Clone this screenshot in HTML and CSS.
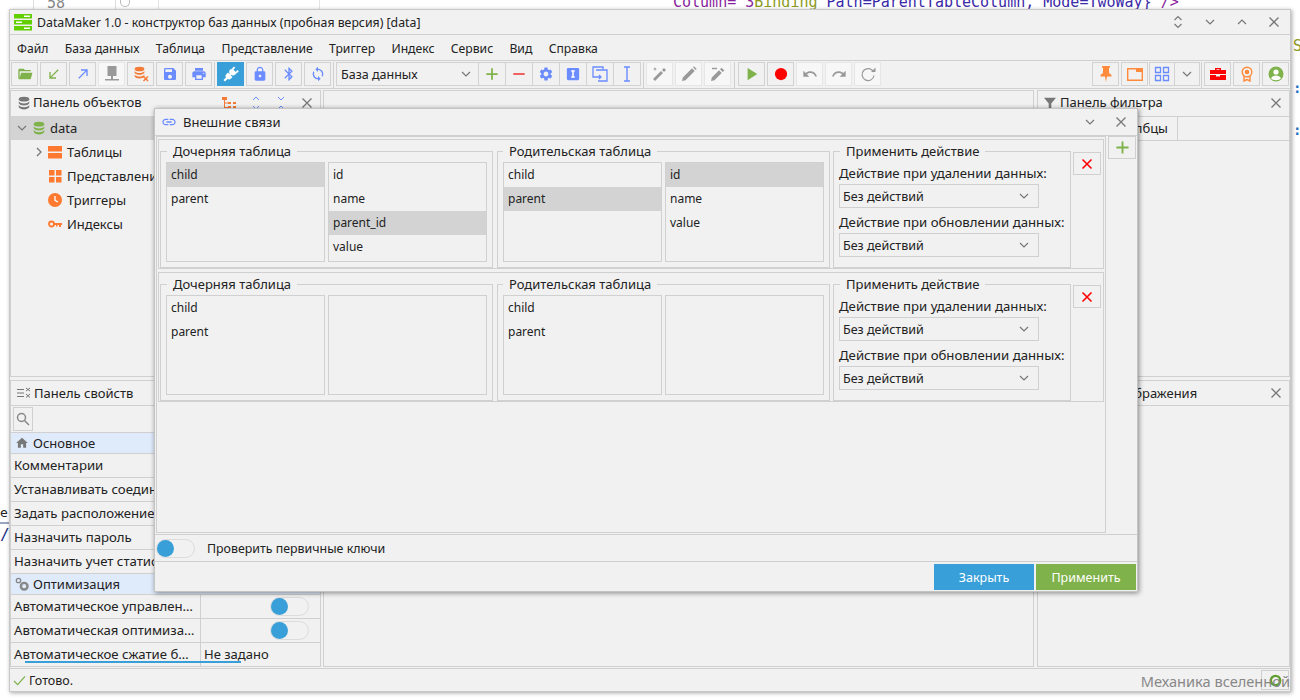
FILE: index.html
```html
<!DOCTYPE html>
<html lang="ru">
<head>
    <meta charset="UTF-8">
    <title>DataMaker 1.0</title>
    <link rel="stylesheet" href="styles.css">
</head>
<body>

    <!-- Icons used more than once -->
    <svg class="sprite" xmlns="http://www.w3.org/2000/svg">
        <symbol id="i-close" viewBox="0 0 12 12"><path d="M1.5 1.5l9 9M10.5 1.5l-9 9" fill="none" stroke="#777" stroke-width="1.3"/></symbol>
        <symbol id="i-down" viewBox="0 0 12 12"><path d="M2 4l4 4 4-4" fill="none" stroke="#777" stroke-width="1.2"/></symbol>
        <symbol id="i-up" viewBox="0 0 12 12"><path d="M2 8l4-4 4 4" fill="none" stroke="#777" stroke-width="1.2"/></symbol>
        <symbol id="i-plus" viewBox="0 0 16 16"><path d="M8 1.5v13M1.5 8h13" fill="none" stroke="#7fb24a" stroke-width="2"/></symbol>
        <symbol id="i-cross" viewBox="0 0 12 12"><path d="M1.5 1.5l9 9M10.5 1.5l-9 9" fill="none" stroke="#f00" stroke-width="1.6"/></symbol>
        <symbol id="i-db" viewBox="0 0 16 16"><ellipse cx="8" cy="3.6" rx="6" ry="2.8"/><path d="M2 6c1 1.700 3.400 2.500 6 2.500S13 7.700 14 6v2.300c-1 1.700-3.400 2.500-6 2.500S3 10 2 8.300z"/><path d="M2 10.400c1 1.700 3.400 2.500 6 2.500s5-.8 6-2.500v2.200c-.6 1.700-3.400 2.800-6 2.800s-5.400-1.100-6-2.800z"/></symbol>
        <symbol id="i-wand" viewBox="0 0 16 16"><path d="M3 15l-2-2 8-8 2 2z M10 4l2-2 2 2-2 2z"/><path d="M3 1l.6 1.400L5 3l-1.400.6L3 5l-.6-1.400L1 3l1.400-.6z"/></symbol>
    </svg>

    <!-- Things behind the application window -->
    <div class="backdrop">
        <div class="bg-grid"></div>
        <div class="bg-line-no">58</div>
        <div class="bg-fold"></div>
        <div class="bg-code"><span class="c-purple">Column="3</span><span class="c-olive">Binding</span> <span class="c-blue">Path=ParentTableColumn, Mode=TwoWay}</span><span class="c-purple">"/&gt;</span></div>
        <div class="bg-side-o">So</div>
        <div class="bg-dots bg-dots-a">:</div>
        <div class="bg-dots bg-dots-b">:</div>
        <div class="bg-left-e">e</div>
        <div class="bg-left-rule"></div>
        <div class="bg-left-slash">/</div>
    </div>

    <div class="app-window">

        <div class="title-bar">
            <svg class="app-logo" viewBox="0 0 18 17" width="18" height="17"><path fill="#62d000" d="M0 0h18v4.500H0zM0 6h18v4.500H0zM0 12h18v4.500H0z"/><path fill="#fff" d="M10 1.400h6v1.700h-6zM2 7.400h6v1.700H2zM10 13.400h6v1.700h-6z"/></svg>
            <span class="title-text">DataMaker 1.0 - конструктор баз данных (пробная версия) [data]</span>
            <div class="win-controls">
                <span class="win-btn"><svg width="10" height="14" viewBox="0 0 10 14" fill="none" stroke="#777" stroke-width="1.100"><path d="M1.500 5l3.500-3.500L8.500 5M1.500 9L5 12.500 8.500 9"/></svg></span>
                <span class="win-btn"><svg width="12" height="12"><use href="#i-down"/></svg></span>
                <span class="win-btn"><svg width="12" height="12"><use href="#i-up"/></svg></span>
                <span class="win-btn"><svg width="12" height="12"><use href="#i-close"/></svg></span>
            </div>
        </div>

        <div class="menu-bar">
            <span>Файл</span>
            <span>База данных</span>
            <span>Таблица</span>
            <span>Представление</span>
            <span>Триггер</span>
            <span>Индекс</span>
            <span>Сервис</span>
            <span>Вид</span>
            <span>Справка</span>
        </div>

        <div class="tool-bar">
            <div class="tb-group">
                <span class="tb"><svg viewBox="0 0 24 24"><path fill="#7fb24a" d="M19 20H4c-1.110 0-2-.9-2-2V6c0-1.110.89-2 2-2h6l2 2h7a2 2 0 0 1 2 2H4v10l2.140-8h17.070l-2.280 8.500c-.23.87-1.010 1.500-1.930 1.500z"/></svg></span>
                <span class="tb"><svg viewBox="0 0 24 24"><path fill="#7fb24a" d="M19 6.410L17.590 5 7 15.590V9H5v10h10v-2H8.410z"/></svg></span>
                <span class="tb"><svg viewBox="0 0 24 24"><path fill="#6a8cff" d="M5 17.590L6.410 19 17 8.410V15h2V5H9v2h6.590z"/></svg></span>
                <span class="tb tb-off"><svg viewBox="0 0 16 16"><path fill="#999" d="M3.500 0h9v10h-9zM7 10h2v3H7zM1 13h14v1.500H1z"/></svg></span>
                <span class="tb"><svg viewBox="0 0 16 16" fill="#f47a35"><use href="#i-db" width="13" height="13"/><path d="M10.500 10.500l4.500 4.500M15 10.500L10.500 15" stroke="#f47a35" stroke-width="1.500"/></svg></span>
                <span class="tb"><svg viewBox="0 0 24 24"><path fill="#6a8cff" d="M17 3H5c-1.110 0-2 .9-2 2v14c0 1.100.89 2 2 2h14c1.100 0 2-.9 2-2V7l-4-4zm-5 16c-1.660 0-3-1.340-3-3s1.340-3 3-3 3 1.340 3 3-1.340 3-3 3zm3-10H5V5h10v4z"/></svg></span>
                <span class="tb"><svg viewBox="0 0 24 24"><path fill="#6a8cff" d="M19 8H5c-1.660 0-3 1.340-3 3v6h4v4h12v-4h4v-6c0-1.660-1.340-3-3-3zm-3 11H8v-5h8v5zm3-7c-.55 0-1-.45-1-1s.45-1 1-1 1 .45 1 1-.45 1-1 1zm-1-9H6v4h12V3z"/></svg></span>
            </div>
            <div class="tb-sep"></div>
            <div class="tb-group">
                <span class="tb tb-on"><svg viewBox="0 0 16 16" fill="#fff"><path d="M9.500 2.200l4.300 4.300-1.500 1.500c-1.200 1.200-3 1.300-4.300.2L6.600 9.600 5.300 8.300l1.400-1.400c-.8-1.200-.7-2.900.4-4z" transform="translate(0 .5)"/><path d="M11 .5l1.300 1.300-2 2L9 2.500zM14.500 4l1.300 1.300-2 2L12.500 6z"/><path d="M5 6.500L9.500 11l-1.700 1.700c-1 1-2.300 1-3.200.3L2 15.500 .5 14l2.500-2.600c-.7-1-.7-2.200.3-3.200z"/></svg></span>
                <span class="tb"><svg viewBox="0 0 24 24"><path fill="#6a8cff" d="M18 8h-1V6c0-2.760-2.240-5-5-5S7 3.240 7 6v2H6c-1.100 0-2 .9-2 2v10c0 1.100.9 2 2 2h12c1.100 0 2-.9 2-2V10c0-1.100-.9-2-2-2zm-6 9c-1.100 0-2-.9-2-2s.9-2 2-2 2 .9 2 2-.9 2-2 2zm3.100-9H8.900V6c0-1.710 1.390-3.100 3.100-3.100 1.710 0 3.100 1.390 3.100 3.100v2z"/></svg></span>
                <span class="tb"><svg viewBox="0 0 24 24"><path fill="#6a8cff" d="M17.710 7.710L12 2h-1v7.590L6.410 5 5 6.410 10.590 12 5 17.590 6.410 19 11 14.410V22h1l5.710-5.710-4.300-4.290 4.300-4.290zM13 5.830l1.880 1.880L13 9.590V5.830zm1.880 10.460L13 18.170v-3.760l1.880 1.880z"/></svg></span>
                <span class="tb"><svg viewBox="0 0 24 24"><path fill="#6a8cff" d="M12 4V1L8 5l4 4V6c3.310 0 6 2.690 6 6 0 1.010-.25 1.970-.7 2.800l1.460 1.460C19.540 15.030 20 13.570 20 12c0-4.420-3.580-8-8-8zm0 14c-3.310 0-6-2.690-6-6 0-1.010.25-1.970.7-2.800L5.240 7.740C4.460 8.970 4 10.430 4 12c0 4.420 3.580 8 8 8v3l4-4-4-4v3z"/></svg></span>
            </div>
            <div class="tb-sep"></div>
            <div class="tb-joined">
                <div class="tb-combo"><span>База данных</span><svg width="12" height="12"><use href="#i-down"/></svg></div>
                <span class="tb"><svg class="tb-mini" viewBox="0 0 16 16"><use href="#i-plus"/></svg></span>
                <span class="tb"><svg class="tb-mini" viewBox="0 0 16 16"><path d="M1.500 8h13" stroke="#f05a5a" stroke-width="2.200"/></svg></span>
                <span class="tb"><svg viewBox="0 0 24 24"><path fill="#6a8cff" d="M19.140 12.940c.04-.3.06-.61.06-.94 0-.32-.02-.64-.07-.94l2.030-1.580a.49.49 0 0 0 .12-.61l-1.920-3.320a.488.488 0 0 0-.59-.22l-2.390.96c-.5-.38-1.030-.7-1.620-.94l-.36-2.540a.484.484 0 0 0-.48-.41h-3.840c-.24 0-.43.17-.47.41l-.36 2.540c-.59.24-1.130.57-1.620.94l-2.390-.96c-.22-.08-.47 0-.59.22L2.740 8.870c-.12.21-.08.47.12.61l2.030 1.580c-.05.3-.09.63-.09.94s.02.64.07.94l-2.030 1.580a.49.49 0 0 0-.12.61l1.920 3.320c.12.22.37.29.59.22l2.390-.96c.5.38 1.030.7 1.620.94l.36 2.540c.05.24.24.41.48.41h3.840c.24 0 .44-.17.47-.41l.36-2.540c.59-.24 1.130-.56 1.620-.94l2.390.96c.22.08.47 0 .59-.22l1.920-3.320c.12-.22.07-.47-.12-.61l-2.010-1.580zM12 15.600c-1.980 0-3.600-1.620-3.600-3.600s1.620-3.600 3.600-3.600 3.600 1.620 3.600 3.600-1.620 3.600-3.600 3.600z"/></svg></span>
                <span class="tb"><svg class="tb-mini" viewBox="0 0 16 16"><rect x="1" y="1" width="14" height="14" rx="1.500" fill="#6a8cff"/><path d="M6 4.500h4M6 11.500h4M8 4.500v7" stroke="#fff" stroke-width="1.800" fill="none"/></svg></span>
                <span class="tb"><svg viewBox="0 0 16 16" fill="none" stroke="#6a8cff" stroke-width="1.300"><path d="M11 3.500V1H1v10h3"/><path d="M4 4h11v11H6"/><path d="M4 11h5M7 9l2 2-2 2"/></svg></span>
                <span class="tb"><svg viewBox="0 0 16 16" fill="none" stroke="#6a8cff" stroke-width="1.400"><path d="M5 1h6M5 15h6M8 1v14"/></svg></span>
            </div>
            <div class="tb-sep"></div>
            <div class="tb-group">
                <span class="tb tb-off"><svg viewBox="0 0 16 16" fill="#999"><use href="#i-wand"/></svg></span>
                <span class="tb tb-off"><svg viewBox="0 0 16 16"><path fill="#999" d="M1 15l.8-3.500L11 2.300 13.700 5 4.500 14.200zM12 1.300l1-1L15.700 3l-1 1z"/></svg></span>
                <span class="tb tb-off"><svg viewBox="0 0 16 16"><path fill="#999" d="M1 15l.8-3.500L9 4.300 11.700 7 4.500 14.200zM10 3.300l1.600-1.600L14.300 4.400 12.700 6z"/><path d="M2 2.500h5" stroke="#999" stroke-width="1.400"/></svg></span>
            </div>
            <div class="tb-sep tb-sep-wide"></div>
            <div class="tb-group">
                <span class="tb"><svg class="tb-mini" viewBox="0 0 16 16"><path fill="#7fb24a" d="M3 1l11 7-11 7z"/></svg></span>
                <span class="tb"><svg class="tb-mini" viewBox="0 0 16 16"><circle cx="8" cy="8" r="7" fill="#f00"/></svg></span>
                <span class="tb tb-off"><svg viewBox="0 0 24 24"><path fill="#999" d="M12.500 8c-2.650 0-5.050.99-6.900 2.600L2 7v9h9l-3.620-3.620c1.390-1.160 3.160-1.880 5.120-1.880 3.540 0 6.550 2.310 7.600 5.500l2.370-.78C21.080 11.030 17.150 8 12.500 8z"/></svg></span>
                <span class="tb tb-off"><svg viewBox="0 0 24 24"><path fill="#999" d="M18.400 10.600C16.550 8.990 14.150 8 11.500 8c-4.650 0-8.580 3.030-9.960 7.220L3.900 16c1.050-3.190 4.050-5.500 7.600-5.500 1.950 0 3.730.72 5.120 1.880L13 16h9V7l-3.600 3.600z"/></svg></span>
                <span class="tb tb-off"><svg viewBox="0 0 16 16" fill="none" stroke="#999" stroke-width="1.200"><path d="M13.500 6A6 6 0 1 0 14 9.500"/><path fill="#999" stroke="none" d="M11 6h4.500V1.500z"/></svg></span>
            </div>
            <div class="tb-spacer"></div>
            <div class="tb-group">
                <span class="tb"><svg viewBox="0 0 16 16"><path fill="#ff8a3c" d="M4 0h8v1.500l-1 .5v5l2.500 2v1.500H9L8 16l-1-5.500H2.500V9L5 7V2l-1-.5z"/></svg></span>
                <span class="tb"><svg viewBox="0 0 16 16"><path fill="none" stroke="#ff8a3c" stroke-width="1.400" d="M.7 2.700h14.600v11.600H.7z"/><path fill="#ff8a3c" d="M9 2h7v4H9z"/></svg></span>
                <div class="tb-joined">
                    <span class="tb tb-wide"><svg viewBox="0 0 16 16" fill="none" stroke="#6a8cff" stroke-width="1.300"><path d="M1.500 1.500h5v5h-5zM9.500 1.500h5v5h-5zM1.500 9.500h5v5h-5zM9.500 9.500h5v5h-5z"/></svg></span>
                    <span class="tb tb-wide"><svg class="tb-chev" viewBox="0 0 12 12"><use href="#i-down"/></svg></span>
                </div>
            </div>
            <div class="tb-sep tb-sep-narrow"></div>
            <div class="tb-group">
                <span class="tb"><svg viewBox="0 0 16 16"><path fill="#f00" d="M5 2h6v2h5v4H0V4h5zM6.500 3.300v.7h3v-.7zM0 9h6v1.500h4V9h6v5H0z"/></svg></span>
                <span class="tb"><svg viewBox="0 0 16 16" fill="none" stroke="#ff8a3c" stroke-width="1.400"><circle cx="8" cy="6" r="4.800"/><circle cx="8" cy="6" r="1.600" fill="#ff8a3c"/><path d="M5 10v5l3-1.500 3 1.500v-5"/></svg></span>
                <span class="tb"><svg viewBox="0 0 16 16"><circle cx="8" cy="8" r="7.500" fill="#7fb24a"/><circle cx="8" cy="6" r="2.600" fill="#fff"/><path fill="#fff" d="M3 12.500c.8-2 2.800-3 5-3s4.200 1 5 3c-1.200 1-3 1.700-5 1.700s-3.800-.7-5-1.700z"/></svg></span>
            </div>
        </div>

        <div class="workspace">
            <div class="side-col side-left">
                <div class="panel">
                    <div class="panel-head">
                        <svg class="ph-icon" viewBox="0 0 16 16" fill="#777" width="14" height="14"><use href="#i-db"/></svg>
                        <span class="ph-title">Панель объектов</span>
                        <div class="ph-tools">
                            <svg width="14" height="12" viewBox="0 0 14 12" fill="#f47a35"><path d="M0 0h5v3H0zM6 5h3v2H6zM11 5h3v2h-3zM6 9h3v2H6zM11 9h3v2h-3zM2 3h1v7h3v1H2zM3 5.500h3v1H3z"/></svg>
                            <svg width="10" height="14" viewBox="0 0 10 14" fill="none" stroke="#6a8cff"><path d="M2 4l3-3 3 3M2 10l3 3 3-3"/></svg>
                            <svg width="10" height="14" viewBox="0 0 10 14" fill="none" stroke="#6a8cff"><path d="M2 1l3 3 3-3M2 13l3-3 3 3"/></svg>
                            <svg width="12" height="12"><use href="#i-close"/></svg>
                        </div>
                    </div>
                    <div class="tree-row tree-selected">
                        <svg class="tree-arrow" width="12" height="12"><use href="#i-down"/></svg>
                        <svg class="tree-db" viewBox="0 0 16 16" width="14" height="14" fill="#7fb24a"><use href="#i-db"/></svg>
                        <span>data</span>
                    </div>
                    <div class="tree-row tree-child">
                        <svg class="tree-arrow" viewBox="0 0 12 12" width="12" height="12"><path d="M6 2l4 4-4 4" fill="none" stroke="#777" stroke-width="1.300"/></svg>
                        <svg viewBox="0 0 14 14" width="14" height="14" fill="#ff7a30"><path d="M0 1h14v5.500H0zM0 8h14v5.500H0z"/></svg>
                        <span>Таблицы</span>
                    </div>
                    <div class="tree-row tree-child">
                        <i class="tree-arrow"></i>
                        <svg viewBox="0 0 14 14" width="14" height="14" fill="#ff7a30"><path d="M1 1h5.500v5.500H1zM8 1h5.500v5.500H8zM1 8h5.500v5.500H1zM8 8h5.500v5.500H8z"/></svg>
                        <span>Представления</span>
                    </div>
                    <div class="tree-row tree-child">
                        <i class="tree-arrow"></i>
                        <svg viewBox="0 0 14 14" width="14" height="14"><circle cx="7" cy="7" r="7" fill="#ff7a30"/><path d="M7 3v4.300l3 1.700" stroke="#fff" stroke-width="1.300" fill="none"/></svg>
                        <span>Триггеры</span>
                    </div>
                    <div class="tree-row tree-child">
                        <i class="tree-arrow"></i>
                        <svg viewBox="0 0 14 14" width="14" height="14"><circle cx="3.500" cy="7" r="2.500" fill="none" stroke="#ff7a30" stroke-width="1.800"/><path fill="#ff7a30" d="M6 6h8v2h-1v2h-2V8H9.500v1.500h-1.500V8H6z"/></svg>
                        <span>Индексы</span>
                    </div>
                </div>

                <div class="panel">
                    <div class="panel-head panel-head-short">
                        <svg class="ph-icon" width="14" height="12" viewBox="0 0 14 12" fill="none" stroke="#777"><path d="M0 2.500h7M0 6h7M0 9.500h7M9 1l4 3M13 1L9 4M9 7l4 3.500M13 7l-4 3.500"/></svg>
                        <span class="ph-title ph-title-near">Панель свойств</span>
                    </div>
                    <div class="prop-search">
                        <span class="prop-search-btn"><svg viewBox="0 0 14 14" width="14" height="14" fill="none" stroke="#888" stroke-width="1.500"><circle cx="5.500" cy="5.500" r="4"/><path d="M8.500 8.500L13 13"/></svg></span>
                    </div>
                    <div class="prop-section">
                        <svg viewBox="0 0 24 24" width="14" height="14"><path fill="#777" d="M10 20v-6h4v6h5v-8h3L12 3 2 12h3v8z"/></svg>
                        <span>Основное</span>
                    </div>
                    <div class="prop-row"><span class="prop-name">Комментарии</span></div>
                    <div class="prop-row"><span class="prop-name">Устанавливать соединение</span></div>
                    <div class="prop-row"><span class="prop-name">Задать расположение</span></div>
                    <div class="prop-row"><span class="prop-name">Назначить пароль</span></div>
                    <div class="prop-row"><span class="prop-name">Назначить учет статистики</span></div>
                    <div class="prop-section">
                        <svg viewBox="0 0 16 16" width="14" height="14" fill="#888"><circle cx="4" cy="4" r="2.500" fill="none" stroke="#888" stroke-width="1.500"/><circle cx="10.500" cy="10.500" r="3.800" fill="none" stroke="#888" stroke-width="2.800"/></svg>
                        <span>Оптимизация</span>
                    </div>
                    <div class="prop-row"><span class="prop-name">Автоматическое управление статистикой</span><span class="prop-value"><span class="toggle"><i></i></span></span></div>
                    <div class="prop-row"><span class="prop-name">Автоматическая оптимизация данных</span><span class="prop-value"><span class="toggle"><i></i></span></span></div>
                    <div class="prop-row prop-row-last"><span class="prop-name">Автоматическое сжатие базы данных</span><span class="prop-value prop-text">Не задано</span></div>
                    <div class="prop-underline"></div>
                </div>
            </div>

            <div class="center-panel"></div>

            <div class="side-col side-right">
                <div class="panel">
                    <div class="panel-head">
                        <svg class="ph-icon" viewBox="0 0 14 14" width="12" height="14" fill="#777"><path d="M0 1h14L8.500 7.500V14l-3-1.500v-5z"/></svg>
                        <span class="ph-title ph-title-filter">Панель фильтра</span>
                        <div class="ph-tools"><svg width="12" height="12"><use href="#i-close"/></svg></div>
                    </div>
                    <div class="tab-strip"><span class="tab">Столбцы</span></div>
                </div>
                <div class="panel">
                    <div class="panel-head panel-head-short">
                        <span class="ph-title ph-title-far">Панель отображения</span>
                        <div class="ph-tools"><svg width="12" height="12"><use href="#i-close"/></svg></div>
                    </div>
                </div>
            </div>
        </div>

        <div class="status-bar">
            <svg viewBox="0 0 14 12" width="13" height="11"><path d="M1 6.500l4 4L13 1.500" fill="none" stroke="#7fb24a" stroke-width="1.400"/></svg>
            <span>Готово.</span>
            <div class="status-box"><svg viewBox="0 0 14 14" width="13" height="13"><circle cx="7" cy="7" r="5" fill="none" stroke="#5e9e2e" stroke-width="2.600"/></svg></div>
            <span class="status-over">Механика вселенной</span>
        </div>
    </div>

    <!-- Foreign keys dialog -->
    <div class="dialog">
        <div class="dialog-title">
            <svg viewBox="0 0 24 24" width="16" height="16"><path fill="#6a8cff" d="M3.900 12c0-1.710 1.390-3.100 3.100-3.100h4V7H7c-2.760 0-5 2.240-5 5s2.240 5 5 5h4v-1.900H7c-1.710 0-3.100-1.390-3.100-3.100zM8 13h8v-2H8v2zm9-6h-4v1.900h4c1.710 0 3.100 1.390 3.100 3.100s-1.390 3.100-3.100 3.100h-4V17h4c2.760 0 5-2.240 5-5s-2.240-5-5-5z"/></svg>
            <span>Внешние связи</span>
            <div class="dialog-controls">
                <svg width="12" height="12"><use href="#i-down"/></svg>
                <svg width="12" height="12"><use href="#i-close"/></svg>
            </div>
        </div>

        <div class="dialog-main">
            <div class="link-area">

                <div class="link-row">
                    <fieldset class="link-group">
                        <legend>Дочерняя таблица</legend>
                        <div class="list-pair">
                            <ul class="list">
                                <li class="selected">child</li>
                                <li>parent</li>
                            </ul>
                            <ul class="list">
                                <li>id</li>
                                <li>name</li>
                                <li class="selected">parent_id</li>
                                <li>value</li>
                            </ul>
                        </div>
                    </fieldset>
                    <fieldset class="link-group">
                        <legend>Родительская таблица</legend>
                        <div class="list-pair">
                            <ul class="list">
                                <li>child</li>
                                <li class="selected">parent</li>
                            </ul>
                            <ul class="list">
                                <li class="selected">id</li>
                                <li>name</li>
                                <li>value</li>
                            </ul>
                        </div>
                    </fieldset>
                    <fieldset class="action-group">
                        <legend>Применить действие</legend>
                        <div class="action-label">Действие при удалении данных:</div>
                        <div class="drop"><span>Без действий</span><svg width="12" height="12"><use href="#i-down"/></svg></div>
                        <div class="action-label">Действие при обновлении данных:</div>
                        <div class="drop"><span>Без действий</span><svg width="12" height="12"><use href="#i-down"/></svg></div>
                    </fieldset>
                    <span class="square-btn delete-btn"><svg width="12" height="12"><use href="#i-cross"/></svg></span>
                </div>

                <div class="link-row">
                    <fieldset class="link-group">
                        <legend>Дочерняя таблица</legend>
                        <div class="list-pair">
                            <ul class="list">
                                <li>child</li>
                                <li>parent</li>
                            </ul>
                            <ul class="list"></ul>
                        </div>
                    </fieldset>
                    <fieldset class="link-group">
                        <legend>Родительская таблица</legend>
                        <div class="list-pair">
                            <ul class="list">
                                <li>child</li>
                                <li>parent</li>
                            </ul>
                            <ul class="list"></ul>
                        </div>
                    </fieldset>
                    <fieldset class="action-group">
                        <legend>Применить действие</legend>
                        <div class="action-label">Действие при удалении данных:</div>
                        <div class="drop"><span>Без действий</span><svg width="12" height="12"><use href="#i-down"/></svg></div>
                        <div class="action-label">Действие при обновлении данных:</div>
                        <div class="drop"><span>Без действий</span><svg width="12" height="12"><use href="#i-down"/></svg></div>
                    </fieldset>
                    <span class="square-btn delete-btn"><svg width="12" height="12"><use href="#i-cross"/></svg></span>
                </div>

            </div>
            <div class="add-col">
                <span class="square-btn add-btn"><svg width="15" height="15" viewBox="0 0 16 16"><use href="#i-plus"/></svg></span>
            </div>
        </div>

        <div class="check-row">
            <span class="toggle"><i></i></span>
            <span>Проверить первичные ключи</span>
        </div>

        <div class="dialog-buttons">
            <button class="btn-close">Закрыть</button>
            <button class="btn-apply">Применить</button>
        </div>
    </div>

</body>
</html>
```
FILE: styles.css
```css
/* General */
* {
    box-sizing: border-box;
}

body {
    margin: 0;
    width: 1300px;
    height: 700px;
    overflow: hidden;
    background: #fff;
    color: #222;
    font-family: 'Noto Sans', 'Open Sans', sans-serif;
    font-size: 13px;
    line-height: 17px;
}

.sprite {
    display: none;
}

/* Editor window behind the app */
.backdrop > div {
    position: absolute;
    font-family: 'DejaVu Sans Mono', monospace;
}

.bg-grid {
    left: 33px;
    top: 0;
    width: 413px;
    height: 10px;
    border-left: 1px solid #dcdcdc;
    background:
        linear-gradient(#dcdcdc, #dcdcdc) 81px 0 / 1px 100% no-repeat,
        repeating-linear-gradient(to right, transparent 0 124px, #e4e4e4 124px 125px, transparent 125px 161px);
}

.bg-line-no {
    left: 47px;
    top: -5px;
    color: #888;
    font-size: 15px;
}

.bg-fold {
    left: 120px;
    top: 0;
    width: 10px;
    height: 7px;
    border: 1px solid #bbb;
    border-top: none;
    border-radius: 0 0 5px 5px;
}

.bg-code {
    left: 673px;
    top: -6px;
    font-size: 15px;
    white-space: pre;
}

.c-purple {
    color: #8a1f9e;
}

.c-olive {
    color: #8c9a1e;
}

.c-blue {
    color: #3b2aa8;
}

.bg-side-o {
    left: 1293px;
    top: 38px;
    color: #8c9a1e;
    font-size: 15px;
}

.bg-dots {
    left: 1293px;
    color: #1f6fc0;
    font-size: 14px;
    font-weight: bold;
}

.bg-dots-a {
    top: 80px;
}

.bg-dots-b {
    top: 122px;
}

.bg-left-e {
    left: 0;
    top: 504px;
    font-size: 13px;
}

.bg-left-rule {
    left: 0;
    top: 522px;
    width: 9px;
    height: 2px;
    background: #9aa5c0;
}

.bg-left-slash {
    left: 0;
    top: 526px;
    color: #22338a;
    font-size: 16px;
}

/* Main window */
.app-window {
    position: absolute;
    left: 9px;
    top: 9px;
    width: 1282px;
    height: 683px;
    display: flex;
    flex-direction: column;
    background: #f1f1f1;
    border: 1px solid #c8c8c8;
    box-shadow: 1px 1px 4px rgba(0, 0, 0, 0.35);
}

.title-bar {
    height: 25px;
    display: flex;
    align-items: center;
    padding-left: 4px;
    border-bottom: 1px solid #d0d0d0;
    flex: none;
}

.title-bar .title-text {
    margin-left: 5px;
    font-size: 12.3px;
}

.win-controls {
    margin-left: auto;
    display: flex;
}

.win-btn {
    width: 32px;
    display: flex;
    align-items: center;
    justify-content: center;
}

.menu-bar {
    height: 26px;
    flex: none;
    display: flex;
    align-items: center;
    gap: 16.3px;
    padding: 1px 0 0 7px;
    border-bottom: 1px solid #d0d0d0;
    font-size: 12.2px;
}

/* Toolbar */
.tool-bar {
    height: 28px;
    flex: none;
    display: flex;
    align-items: flex-start;
    padding: 1px 1px 0 1px;
    border-bottom: 1px solid #d0d0d0;
}

.tb-group {
    display: flex;
    gap: 2px;
}

.tb {
    width: 27px;
    height: 24px;
    flex: none;
    display: flex;
    align-items: center;
    justify-content: center;
    border: 1px solid #d2d2d2;
}

.tb svg {
    width: 16px;
    height: 16px;
}

.tb .tb-mini {
    width: 14px;
    height: 14px;
}

.tb .tb-chev {
    width: 12px;
    height: 12px;
}

.tb-off {
    background: #f7f7f7;
    border-color: #e6e6e6;
}

.tb-on {
    background: #389fd8;
    border-color: #389fd8;
}

.tb-sep {
    width: 1px;
    height: 26px;
    margin: 0 2px;
    background: #d0d0d0;
}

.tb-sep-wide {
    margin: 0 3px;
}

.tb-sep-narrow {
    margin: 0 2px 0 1px;
}

.tb-spacer {
    flex: 1;
}

.tb-joined {
    display: flex;
}

.tb-joined .tb {
    margin-left: -1px;
    width: 28px;
}

.tb-joined .tb-wide {
    width: 26px;
}

.tb-combo {
    width: 143px;
    height: 24px;
    display: flex;
    align-items: center;
    justify-content: space-between;
    padding: 0 6px 0 4px;
    border: 1px solid #d2d2d2;
    font-size: 12.5px;
}

/* Workspace panels */
.workspace {
    flex: 1;
    display: flex;
    gap: 2px;
    min-height: 0;
    padding-top: 1px;
}

.side-col {
    display: flex;
    flex-direction: column;
    gap: 3px;
    flex: none;
}

.side-left {
    width: 311px;
}

.side-right {
    width: 253px;
    margin-left: 1px;
}

.center-panel {
    width: 711px;
    height: 577px;
    flex: none;
    border: 1px solid #d0d0d0;
}

.panel {
    position: relative;
    height: 287px;
    flex: none;
    border: 1px solid #d0d0d0;
}

.panel-head {
    height: 26px;
    display: flex;
    align-items: center;
    padding: 0 0 2px 6px;
    border-bottom: 1px solid #d0d0d0;
}

.panel-head-short {
    height: 25px;
    padding-bottom: 0;
}

.ph-icon {
    flex: none;
}

.ph-title {
    margin-left: 2px;
}

.ph-title-near {
    margin-left: 3px;
}

.ph-title-filter {
    margin-left: 4px;
}

.ph-title-far {
    margin-left: 19px;
}

.ph-tools {
    margin-left: auto;
    margin-right: 7px;
    display: flex;
    align-items: center;
    gap: 15px;
}

/* Object tree */
.side-left .panel:first-child .panel-head {
    border-bottom: none;
    height: 25px;
}

.tree-row {
    height: 24px;
    display: flex;
    align-items: center;
    gap: 5px;
    padding-left: 20px;
}

.tree-selected {
    padding-left: 5px;
    gap: 4px;
    background: #d3d3d3;
}

.tree-arrow {
    width: 12px;
    flex: none;
}

.tree-selected svg {
    flex: none;
}

/* Properties */
.prop-search {
    height: 27px;
    border-bottom: 1px solid #d0d0d0;
    padding: 1px 2px;
}

.prop-search-btn {
    width: 20px;
    height: 24px;
    display: flex;
    align-items: center;
    justify-content: center;
    border: 1px solid #d0d0d0;
}

.prop-section {
    height: 21px;
    display: flex;
    align-items: center;
    gap: 4px;
    padding-left: 4px;
    background: #dfeafb;
    border-bottom: 1px solid #d0d0d0;
}

.prop-row {
    height: 24px;
    display: flex;
    border-bottom: 1px solid #d0d0d0;
}

.prop-row-last {
    height: 23px;
    border-bottom: none;
}

.prop-name {
    width: 190px;
    padding: 0 4px 0 3px;
    line-height: 23px;
    font-size: 13.2px;
    white-space: nowrap;
    overflow: hidden;
    text-overflow: ellipsis;
    border-right: 1px solid #d0d0d0;
    flex: none;
}

.prop-value {
    flex: 1;
    display: flex;
    justify-content: flex-end;
    align-items: center;
    padding-right: 11px;
}

.prop-text {
    justify-content: flex-start;
    padding-left: 3px;
}

.prop-underline {
    position: absolute;
    left: 14px;
    bottom: 3px;
    width: 216px;
    height: 2px;
    background: #389fd8;
}

/* Toggle switch */
.toggle {
    width: 39px;
    height: 19px;
    display: block;
    flex: none;
    border: 1px solid #dcdcdc;
    border-radius: 10px;
}

.toggle i {
    display: block;
    width: 17px;
    height: 17px;
    border-radius: 50%;
    background: #389fd8;
}

/* Filter panel tab */
.tab-strip {
    height: 24px;
    border-bottom: 1px solid #d0d0d0;
}

.tab {
    display: block;
    width: 88px;
    height: 23px;
    margin-left: 52px;
    padding-right: 9px;
    line-height: 23px;
    text-align: right;
    border-right: 1px solid #d0d0d0;
}

/* Status bar */
.status-bar {
    position: relative;
    height: 23px;
    flex: none;
    display: flex;
    align-items: center;
    gap: 3px;
    padding: 1px 0 0 3px;
    border-top: 1px solid #d0d0d0;
    font-size: 12.5px;
}

.status-box {
    position: absolute;
    right: 1px;
    top: 1px;
    width: 28px;
    height: 20px;
    display: flex;
    align-items: center;
    justify-content: center;
    border: 1px solid #d0d0d0;
}

.status-over {
    position: absolute;
    right: 0;
    top: 4px;
    color: #888;
    font-size: 14.6px;
}

/* Dialog */
.dialog {
    position: absolute;
    left: 154px;
    top: 108px;
    width: 984px;
    height: 484px;
    display: flex;
    flex-direction: column;
    background: #f1f1f1;
    border: 1px solid #c4c4c4;
    box-shadow: 1px 1px 5px rgba(0, 0, 0, 0.45);
}

.dialog-title {
    height: 27px;
    flex: none;
    display: flex;
    align-items: center;
    gap: 6px;
    padding-left: 6px;
    border-bottom: 1px solid #d0d0d0;
}

.dialog-controls {
    margin-left: auto;
    display: flex;
    gap: 19px;
    padding-right: 10px;
}

.dialog-main {
    flex: 1;
    display: flex;
    min-height: 0;
    padding-bottom: 1px;
    border-bottom: 1px solid #d0d0d0;
}

.link-area {
    width: 950px;
    margin-left: 1px;
    padding: 2px 1px 0 1px;
    border: 1px solid #d0d0d0;
    display: flex;
    flex-direction: column;
    gap: 3px;
}

.link-row {
    height: 130px;
    flex: none;
    display: flex;
    gap: 3px;
    padding: 3px 0 0 1px;
    border: 1px solid #d0d0d0;
}

fieldset {
    margin: 0;
    min-width: 0;
    height: 125px;
    border: 1px solid #d0d0d0;
}

legend {
    margin-left: 1px;
    padding: 0 6px;
    line-height: 17px;
}

.link-group {
    width: 333px;
    padding: 2px 5px 0 5px;
}

.link-group + .link-group {
    margin-left: 1px;
}

.link-group + .link-group legend {
    margin-left: 0;
}

.list-pair {
    display: flex;
    gap: 3px;
}

.list {
    width: 159px;
    height: 100px;
    margin: 0;
    padding: 0;
    list-style: none;
    border: 1px solid #d0d0d0;
    font-size: 12px;
}

.list li {
    height: 24px;
    padding-left: 4px;
    line-height: 23px;
}

.list .selected {
    background: #d3d3d3;
}

.action-group {
    width: 238px;
    padding: 3px 5px 0;
}

.action-label {
    height: 21px;
    line-height: 20px;
    white-space: nowrap;
    font-size: 13.2px;
}

.drop {
    width: 200px;
    height: 24px;
    margin-bottom: 4px;
    display: flex;
    align-items: center;
    justify-content: space-between;
    padding: 0 8px 0 3px;
    border: 1px solid #d0d0d0;
    font-size: 12.5px;
}

.square-btn {
    display: flex;
    align-items: center;
    justify-content: center;
    border: 1px solid #d0d0d0;
    flex: none;
}

.delete-btn {
    width: 28px;
    height: 23px;
    margin-top: 9px;
    margin-left: -1px;
}

.add-col {
    padding: 0 0 0 2px;
}

.add-btn {
    width: 28px;
    height: 23px;
}

.check-row {
    height: 27px;
    flex: none;
    display: flex;
    align-items: center;
    gap: 12px;
    padding-left: 1px;
    border-bottom: 1px solid #d0d0d0;
    font-size: 12.4px;
}

.dialog-buttons {
    height: 29px;
    flex: none;
    display: flex;
    justify-content: flex-end;
    gap: 2px;
    padding: 2px 1px 0 0;
}

.dialog-buttons button {
    width: 100px;
    height: 26px;
    border: none;
    color: #fff;
    font-family: inherit;
    font-size: 12.5px;
}

.btn-close {
    background: #389fd8;
}

.btn-apply {
    background: #7fb24a;
}
```
